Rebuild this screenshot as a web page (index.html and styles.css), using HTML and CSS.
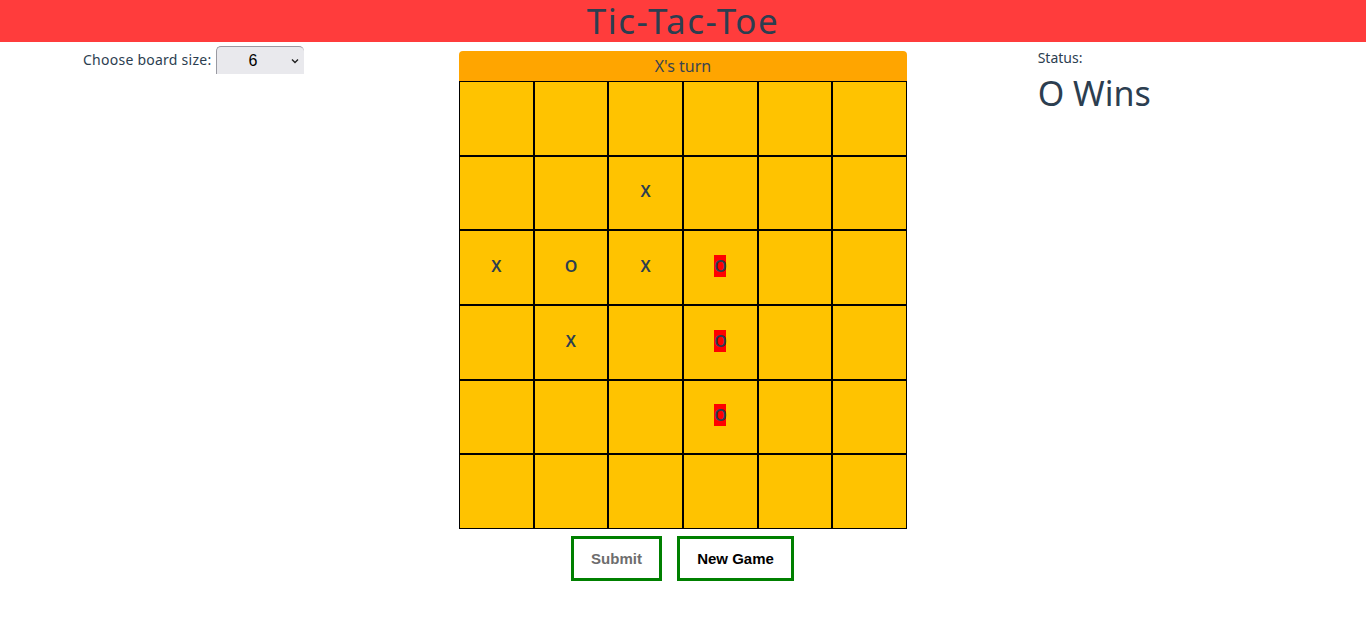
FILE: index.html
```html
<!DOCTYPE html>
<html>
<head>
<meta charset="utf-8">
<title>Tic-Tac-Toe</title>
<link rel="stylesheet" href="styles.css">
</head>
<body>
<header class="topbar"><h1 class="title">Tic-Tac-Toe</h1></header>
<main class="layout">
  <section class="left">
    <label class="size-label">Choose board size:</label>
    <div class="select"><span class="select-value">6</span><svg class="chev" width="8" height="6" viewBox="0 0 8 6"><path d="M1 1.5 L4 4.5 L7 1.5" fill="none" stroke="#222" stroke-width="1.4"/></svg></div>
  </section>
  <section class="center">
    <div class="board">
      <div class="turn">X's turn</div>
      <div class="grid">
        <div class="cell"></div><div class="cell"></div><div class="cell"></div><div class="cell"></div><div class="cell"></div><div class="cell"></div>
        <div class="cell"></div><div class="cell"></div><div class="cell"><span>X</span></div><div class="cell"></div><div class="cell"></div><div class="cell"></div>
        <div class="cell"><span>X</span></div><div class="cell"><span>O</span></div><div class="cell"><span>X</span></div><div class="cell"><span class="win">O</span></div><div class="cell"></div><div class="cell"></div>
        <div class="cell"></div><div class="cell"><span>X</span></div><div class="cell"></div><div class="cell"><span class="win">O</span></div><div class="cell"></div><div class="cell"></div>
        <div class="cell"></div><div class="cell"></div><div class="cell"></div><div class="cell"><span class="win">O</span></div><div class="cell"></div><div class="cell"></div>
        <div class="cell"></div><div class="cell"></div><div class="cell"></div><div class="cell"></div><div class="cell"></div><div class="cell"></div>
      </div>
    </div>
    <div class="buttons">
      <button class="btn btn-disabled btn-submit">Submit</button>
      <button class="btn btn-new">New Game</button>
    </div>
  </section>
  <section class="right">
    <div class="status-label">Status:</div>
    <div class="status">O Wins</div>
  </section>
</main>
</body>
</html>
```
FILE: styles.css
```css
* { box-sizing: border-box; }
body {
  margin: 0;
  font-family: "Noto Sans", "Open Sans", sans-serif;
  color: #2c3e50;
  background: #fff;
}
.topbar {
  background: #ff3c3c;
  height: 42px;
  display: flex;
  justify-content: center;
  align-items: center;
}
.title {
  margin: 0;
  font-size: 35px;
  font-weight: 400;
  line-height: 1.1;
  letter-spacing: 1.5px;
  color: #2c3e50;
}
.layout {
  display: grid;
  grid-template-columns: 1fr 1fr 1fr;
}
.left {
  display: flex;
  align-items: flex-start;
  padding: 4px 0 0 83px;
  gap: 5px;
}
.size-label {
  font-size: 14px;
  line-height: 28px;
  letter-spacing: 0.25px;
}
.select {
  width: 88px;
  height: 28px;
  background: #e9e9ed;
  border-top: 1px solid #9a9aa2;
  border-left: 1px solid #9a9aa2;
  border-radius: 5px 5px 0 0;
  display: flex;
  align-items: center;
  position: relative;
  font-family: "Liberation Sans", Arial, sans-serif;
  font-size: 16px;
  color: #000;
}
.select-value {
  margin-left: 31px;
}
.chev {
  position: absolute;
  right: 5px;
  top: 11px;
}
.center {
  display: flex;
  flex-direction: column;
  align-items: center;
  padding-top: 9px;
}
.board {
  width: 448px;
}
.turn {
  height: 30px;
  background: #ffa500;
  border-radius: 4px 4px 0 0;
  text-align: center;
  font-size: 16px;
  line-height: 30px;
  color: #3a4450;
}
.grid {
  display: grid;
  grid-template-columns: repeat(6, 1fr);
  grid-auto-rows: 74.667px;
}
.cell {
  background: #ffc300;
  border: 1px solid #000;
  display: flex;
  align-items: center;
  justify-content: center;
  font-size: 16px;
  font-weight: 600;
  padding-bottom: 3px;
}
.win {
  background: #ff0000;
  padding: 0;
  width: 12px;
  text-align: center;
  line-height: 22px;
}
.buttons {
  display: flex;
  gap: 15px;
  margin-top: 7px;
  margin-right: 1px;
}
.btn {
  height: 45px;
  padding: 0;
  background: #fff;
  border: 3px solid #008000;
  font-family: "Liberation Sans", Arial, sans-serif;
  font-weight: 700;
  font-size: 15px;
  color: #000;
}
.btn-submit { width: 91px; }
.btn-new { width: 117px; }
.btn-disabled {
  color: #6d6d6d;
}
.right {
  padding: 6px 0 0 127px;
}
.status-label {
  font-size: 14px;
  line-height: 20px;
}
.status {
  font-size: 34px;
  line-height: 50px;
}
```
